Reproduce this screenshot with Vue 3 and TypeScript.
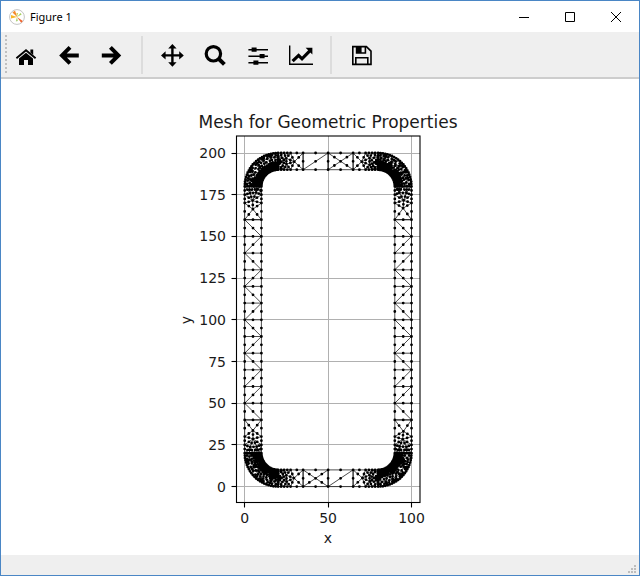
<script setup lang="ts">
type Point = [number, number]
type Edge = [Point, Point]

const scale = 1.668
const originX = 244.7
const originY = 486.6
const sx = (x: number): number => originX + x * scale
const sy = (y: number): number => originY - y * scale

const xTicks = [0, 50, 100]
const yTicks = [0, 25, 50, 75, 100, 125, 150, 175, 200]

function randomSource(seed: number): () => number {
  let state = seed
  return () => {
    state = (state * 16807) % 2147483647
    return state / 2147483647 - 0.5
  }
}

// Incremental Delaunay triangulation
function triangulate(source: Point[]): number[][] {
  const pts: Point[] = [...source, [-900, -800], [1000, -850], [30, 1100]]
  const n = source.length
  let tris: number[][] = [[n, n + 1, n + 2]]
  const holds = (t: number[], p: Point): boolean => {
    const [a, b, c] = t.map((i) => pts[i])
    const ax = a[0] - p[0], ay = a[1] - p[1]
    const bx = b[0] - p[0], by = b[1] - p[1]
    const cx = c[0] - p[0], cy = c[1] - p[1]
    const det =
      (ax * ax + ay * ay) * (bx * cy - cx * by) -
      (bx * bx + by * by) * (ax * cy - cx * ay) +
      (cx * cx + cy * cy) * (ax * by - bx * ay)
    const turn = (b[0] - a[0]) * (c[1] - a[1]) - (b[1] - a[1]) * (c[0] - a[0])
    return turn > 0 ? det > 0 : det < 0
  }
  for (let i = 0; i < n; i++) {
    const bad = tris.filter((t) => holds(t, pts[i]))
    const rim = new Map<string, number[]>()
    for (const t of bad) {
      for (let k = 0; k < 3; k++) {
        const e = [t[k], t[(k + 1) % 3]]
        const key = [...e].sort((p, q) => p - q).join('-')
        if (rim.has(key)) rim.delete(key)
        else rim.set(key, e)
      }
    }
    tris = tris.filter((t) => !bad.includes(t))
    rim.forEach((e) => tris.push([e[0], e[1], i]))
  }
  return tris.filter((t) => t.every((i) => i < n))
}

// Corner piece in lower-left orientation: arc plus the graded ends of both walls
function cornerEdges(seed: number): Edge[] {
  const rand = randomSource(seed)
  const pts: Point[] = []
  const add = (x: number, y: number, j = 0): void => {
    pts.push([x + rand() * (j + 0.002), y + rand() * (j + 0.002)])
  }
  const rings: [number, number, number][] = [
    [10, 18, 0], [11.1, 15, 0.2], [12.6, 11, 0.5], [14.6, 8, 1.1],
    [17.3, 6, 1.4], [20, 11, 0],
  ]
  for (const [r, count, jitter] of rings) {
    for (let k = 0; k <= count; k++) {
      const a = Math.PI + (k / count) * (Math.PI / 2)
      const end = k === 0 || k === count
      add(20 + r * Math.cos(a), 20 + r * Math.sin(a), end ? 0 : jitter)
    }
  }
  const vertical: Point[] = [
    [0, 40], [10, 40], [0, 30], [10, 30], [0, 25], [10, 25],
    [5, 33.4], [5, 28.4], [3, 24], [7, 23.8],
  ]
  const horizontal: Point[] = [
    [35, 0], [35, 10], [27.5, 0], [27.5, 10], [23.6, 0], [23.6, 10],
    [29.6, 5.2], [25.2, 6.8], [25, 3], [22.2, 5.4],
  ]
  for (const [x, y] of [...vertical, ...horizontal]) {
    const inside = (x > 0 && x < 10) || (y > 0 && y < 10 && x > 20 && x < 35)
    add(x, y, inside ? 0.6 : 0)
  }
  const edges = new Map<string, Edge>()
  for (const t of triangulate(pts)) {
    const cx = (pts[t[0]][0] + pts[t[1]][0] + pts[t[2]][0]) / 3
    const cy = (pts[t[0]][1] + pts[t[1]][1] + pts[t[2]][1]) / 3
    const r = Math.hypot(cx - 20, cy - 20)
    const inArc = cx <= 20 && cy <= 20 && r > 9.96
    const inWall = (cy > 20 && cx > 0.02 && cx < 9.98) || (cx > 20 && cy > 0.02 && cy < 9.98)
    if (!inArc && !inWall) continue
    for (let k = 0; k < 3; k++) {
      const a = t[k], b = t[(k + 1) % 3]
      edges.set(`${Math.min(a, b)}-${Math.max(a, b)}`, [pts[a], pts[b]])
    }
  }
  return [...edges.values()]
}

// For each 10-unit bay from y=160 downwards: true when the diagonal falls left to right
const leftBays = [1, 0, 1, 0, 1, 0, 1, 0, 1, 0, 0, 1].map(Boolean)
const rightBays = [1, 0, 0, 1, 0, 1, 1, 0, 1, 0, 0, 1].map(Boolean)

function wallEdges(x0: number, bays: boolean[]): Edge[] {
  const x1 = x0 + 10
  const out: Edge[] = []
  bays.forEach((falls, i) => {
    const top = 160 - i * 10
    const low = top - 10
    out.push([[x0, top], [x1, top]], [[x0, top], [x0, low]], [[x1, top], [x1, low]])
    out.push(falls ? [[x0, top], [x1, low]] : [[x1, top], [x0, low]])
  })
  out.push([[x0, 40], [x1, 40]])
  return out
}

function bayEdges(x0: number, y0: number, crossed: boolean): Edge[] {
  const x1 = x0 + 15
  const y1 = y0 + 10
  const out: Edge[] = [
    [[x0, y0], [x1, y0]], [[x0, y1], [x1, y1]], [[x0, y0], [x0, y1]], [[x1, y0], [x1, y1]],
  ]
  if (crossed) {
    const c: Point = [x0 + 7.5, y0 + 5]
    out.push([[x0, y0], c], [[x1, y0], c], [[x0, y1], c], [[x1, y1], c])
  } else {
    out.push([[x0, y0], [x1, y1]])
  }
  return out
}

function mirror(edges: Edge[], flipX: boolean, flipY: boolean): Edge[] {
  const map = ([x, y]: Point): Point => [flipX ? 100 - x : x, flipY ? 200 - y : y]
  return edges.map(([a, b]): Edge => [map(a), map(b)])
}

const mesh: Edge[] = [
  ...mirror(cornerEdges(4211), false, false),
  ...mirror(cornerEdges(9127), true, false),
  ...mirror(cornerEdges(7193), false, true),
  ...mirror(cornerEdges(15331), true, true),
  ...wallEdges(0, leftBays),
  ...wallEdges(90, rightBays),
  ...bayEdges(35, 0, true),
  ...bayEdges(50, 0, false),
  ...bayEdges(35, 190, false),
  ...bayEdges(50, 190, true),
]

const at = ([x, y]: Point): string => `${sx(x).toFixed(1)} ${sy(y).toFixed(1)}`
const linePath = mesh.map(([a, b]) => `M${at(a)}L${at(b)}`).join('')
const nodes = new Set<string>()
for (const [a, b] of mesh) {
  nodes.add(at(a))
  nodes.add(at(b))
  nodes.add(at([(a[0] + b[0]) / 2, (a[1] + b[1]) / 2]))
}
const nodePath = [...nodes].map((p) => `M${p}h0.01`).join('')
</script>

<template>
  <div class="window">
    <header class="titlebar">
      <svg class="app-icon" viewBox="0 0 16 16" aria-hidden="true">
        <circle cx="8" cy="8" r="7.4" fill="#fff" stroke="#c4c4c4" />
        <path d="M8.4 8.2 3.4 3.4 6 1.4Z" fill="#f58a2c" />
        <path d="M8 8 2 9.6 2 6Z" fill="#f7b526" />
        <path d="M8 8 13.8 12 12.2 13.8Z" fill="#f0642d" />
        <path d="M8 8 11.6 4 12.6 5.6Z" fill="#a5cf5b" />
        <path d="M8 8 6.8 12.5 8.8 12Z" fill="#a8d070" />
        <path d="M8 8 7.5 4 9 4Z" fill="#c8cf4a" />
      </svg>
      <h1 class="caption">Figure 1</h1>
      <button class="control" type="button" aria-label="Minimize">
        <svg viewBox="0 0 12 12"><path d="M1 6.5H11" /></svg>
      </button>
      <button class="control" type="button" aria-label="Maximize">
        <svg viewBox="0 0 12 12"><path d="M1.5 1.5H10.5V10.5H1.5Z" /></svg>
      </button>
      <button class="control" type="button" aria-label="Close">
        <svg viewBox="0 0 12 12"><path d="M1 1 11 11M11 1 1 11" /></svg>
      </button>
    </header>

    <nav class="toolbar" aria-label="Plot tools">
      <span class="grip"></span>
      <button class="tool" type="button" aria-label="Home">
        <svg viewBox="0 0 24 24">
          <path d="M5 15.6 12 9.8 19 15.6V22H14V17H10V22H5Z" />
          <path d="M16.4 6.4H19.2V12L16.4 9.6Z" />
          <path class="line" stroke-width="1.9" d="M2.4 15.2 12 7.2 21.6 15.2" />
        </svg>
      </button>
      <button class="tool" type="button" aria-label="Back">
        <svg viewBox="0 0 24 24"><path class="line" stroke-width="4" d="M13 4.4 5 12.4 13 20.4M6 12.4H21.8" /></svg>
      </button>
      <button class="tool" type="button" aria-label="Forward">
        <svg viewBox="0 0 24 24"><path class="line" stroke-width="4" d="M10.4 4.4 18.4 12.4 10.4 20.4M17.4 12.4H1.8" /></svg>
      </button>
      <span class="separator"></span>
      <button class="tool" type="button" aria-label="Pan">
        <svg viewBox="0 0 24 24">
          <path class="line" stroke-width="2.4" d="M12.4 4V21M4 12.4H21" />
          <path d="M12.4 1 16.6 5.6H8.2ZM12.4 23.8 16.6 19.2H8.2ZM1 12.4 5.6 8.2V16.6ZM23.8 12.4 19.2 8.2V16.6Z" />
        </svg>
      </button>
      <button class="tool" type="button" aria-label="Zoom">
        <svg viewBox="0 0 24 24">
          <circle class="line" stroke-width="3.2" cx="10.4" cy="10.8" r="7.2" />
          <path class="line" stroke-width="4" d="M15.6 15.8 21.4 21.4" />
        </svg>
      </button>
      <button class="tool" type="button" aria-label="Configure subplots">
        <svg viewBox="0 0 24 24">
          <path class="line" stroke-width="1.6" d="M2.4 6.7H22M2.4 13.2H22M2.4 19.7H22" />
          <path d="M5.6 4.6H10.6V8.8H5.6ZM13.6 11.1H18.6V15.3H13.6ZM7.4 17.6H12.4V21.8H7.4Z" />
        </svg>
      </button>
      <button class="tool" type="button" aria-label="Edit axes">
        <svg viewBox="0 0 24 24">
          <path class="line" stroke-width="1.4" d="M0.7 2.6V21.2H24" />
          <path class="line" stroke-width="3.2" d="M3.6 18.2 9.6 12.4 13 15.8 20.8 7.8" />
          <path d="M16.6 4.8H23.4V11.6Z" />
        </svg>
      </button>
      <span class="separator"></span>
      <button class="tool" type="button" aria-label="Save">
        <svg viewBox="0 0 24 24">
          <path class="line" stroke-width="1.6" d="M3.8 3.6H17.4L22 8.2V21.4H3.8Z" />
          <path class="line" stroke-width="1.6" d="M6.8 21V14.8H18.8V21M7.6 4V10H16.4V4" />
          <path d="M7.6 4H12.6V10H7.6Z" />
        </svg>
      </button>
    </nav>

    <main class="canvas">
      <svg class="figure" viewBox="1 79 638 476" role="img" aria-label="Mesh for Geometric Properties">
        <g class="grid">
          <path v-for="t in xTicks" :key="t" :d="`M${Math.floor(sx(t)) + 0.5} 136V502`" />
          <path v-for="t in yTicks" :key="t" :d="`M237 ${Math.floor(sy(t)) + 0.5}H420`" />
        </g>
        <path class="edges" :d="linePath" />
        <path class="nodes" :d="nodePath" />
        <rect class="frame" x="236.5" y="136" width="183.5" height="366.5" />
        <g class="ticks">
          <path v-for="t in xTicks" :key="t" :d="`M${Math.floor(sx(t)) + 0.5} 503V507.5`" />
          <path v-for="t in yTicks" :key="t" :d="`M236 ${Math.floor(sy(t)) + 0.5}H231.5`" />
        </g>
        <g class="labels">
          <text v-for="t in xTicks" :key="t" :x="sx(t)" y="523" text-anchor="middle">{{ t }}</text>
          <text v-for="t in yTicks" :key="t" x="226" :y="Math.round(sy(t)) + 5" text-anchor="end">{{ t }}</text>
          <text x="328" y="543" text-anchor="middle">x</text>
          <text transform="translate(191 320) rotate(-90)" text-anchor="middle">y</text>
        </g>
        <text class="heading" x="328" y="128" text-anchor="middle">Mesh for Geometric Properties</text>
      </svg>
    </main>

    <footer class="statusbar">
      <svg class="sizegrip" viewBox="0 0 8 8" aria-hidden="true">
        <path d="M6 0h2v2h-2zM3 3h2v2h-2zM6 3h2v2h-2zM0 6h2v2h-2zM3 6h2v2h-2zM6 6h2v2h-2z" />
      </svg>
    </footer>
  </div>
</template>

<style>
body {
  margin: 0;
}
</style>

<style scoped>
.window {
  display: flex;
  flex-direction: column;
  box-sizing: border-box;
  min-height: 100vh;
  border: 1px solid #4a86c5;
  background: #fff;
  font-family: "Noto Sans", "Open Sans", sans-serif;
}

.titlebar {
  display: flex;
  align-items: center;
  height: 31px;
  padding-left: 8px;
}

.app-icon {
  width: 16px;
  height: 16px;
  margin-right: 5px;
}

.caption {
  flex: 1;
  margin: 0;
  color: #000;
  font-size: 11px;
  font-weight: 400;
  line-height: 16px;
}

.control {
  display: flex;
  align-items: center;
  justify-content: center;
  width: 46px;
  height: 28px;
  padding: 0;
  border: 0;
  background: none;
}

.control svg {
  width: 12px;
  height: 12px;
  fill: none;
  stroke: #000;
}

.toolbar {
  display: flex;
  align-items: center;
  box-sizing: border-box;
  height: 47px;
  padding: 1px 4px 0;
  border-bottom: 2px solid #cdcdcd;
  background: #efefef;
}

.grip {
  width: 2px;
  height: 40px;
  background: repeating-linear-gradient(#c0c0c0 0 2px, #efefef 2px 4px);
}

.tool {
  display: flex;
  align-items: center;
  justify-content: center;
  width: 38px;
  height: 38px;
  margin-right: 5px;
  padding: 0;
  border: 0;
  background: none;
}

.tool svg {
  width: 24px;
  height: 24px;
  fill: #000;
}

.tool .line {
  fill: none;
  stroke: #000;
}

.separator {
  display: flex;
  justify-content: center;
  width: 12px;
  height: 38px;
  margin-right: 5px;
}

.separator::before {
  width: 2px;
  background: #dcdcdc;
  content: "";
}

.canvas {
  display: flex;
  flex: 1;
  min-height: 0;
}

.figure {
  width: 100%;
  font-family: "DejaVu Sans", sans-serif;
}

.grid {
  fill: none;
  stroke: #b0b0b0;
}

.edges {
  fill: none;
  stroke: #000;
  stroke-width: 0.7;
}

.nodes {
  fill: none;
  stroke: #000;
  stroke-width: 2.8;
  stroke-linecap: round;
}

.frame,
.ticks {
  fill: none;
  stroke: #000;
  stroke-width: 1.1;
}

.labels {
  fill: #1a1a1a;
  font-size: 14px;
}

.heading {
  fill: #1a1a1a;
  font-size: 17px;
}

.statusbar {
  display: flex;
  align-items: flex-end;
  justify-content: flex-end;
  box-sizing: border-box;
  height: 20px;
  padding: 2px 3px;
  background: #efefef;
}

.sizegrip {
  width: 8px;
  height: 8px;
  fill: #bdbdbd;
}
</style>
